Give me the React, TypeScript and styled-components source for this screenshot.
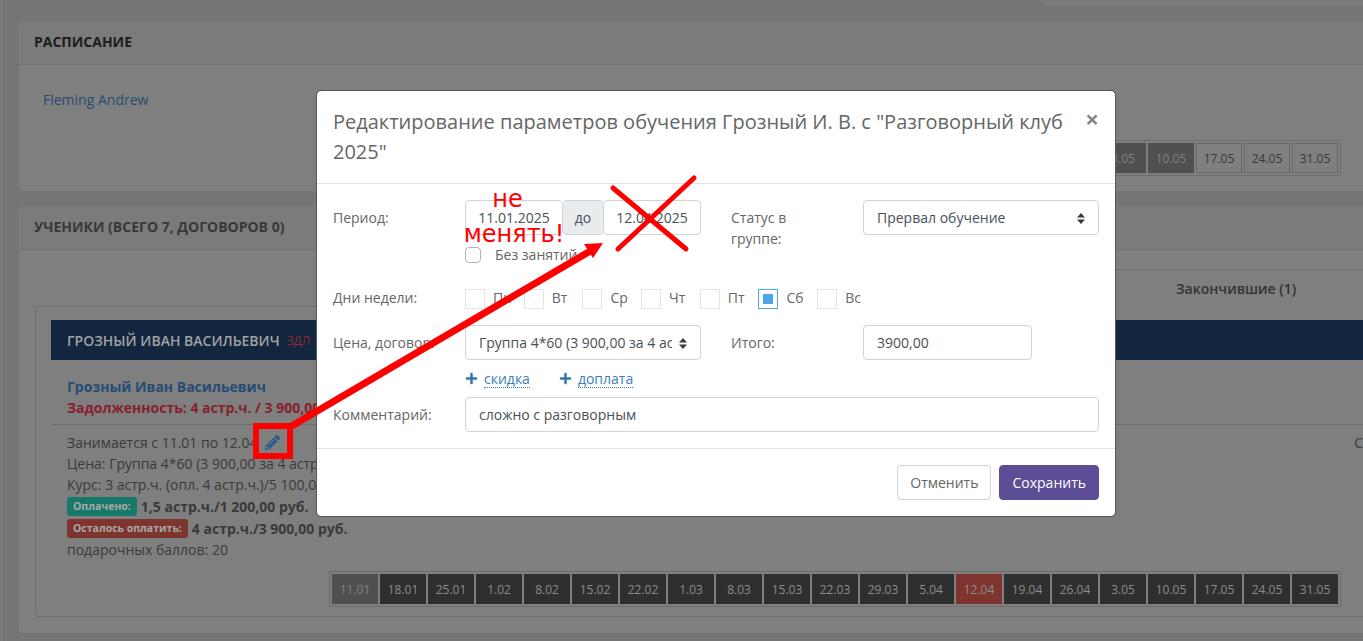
import React from 'react';
import styled, { createGlobalStyle } from 'styled-components';
import { FaPencilAlt, FaPlus } from 'react-icons/fa';

const GlobalStyle = createGlobalStyle`
  html, body {
    margin: 0;
    height: 641px;
    overflow: hidden;
    background: #747577;
    font-family: "Open Sans", "Noto Sans", sans-serif;
    font-size: 14px;
    line-height: 21px;
    color: #3a3a3a;
  }
  * { box-sizing: border-box; }
`;

const Page = styled.div`
  position: relative;
  width: 1363px;
  height: 641px;
  overflow: hidden;
  border-left: 3px solid #7b7b7c;
  padding-left: 16px;
`;

const TopBar = styled.div`
  height: 21px;
  display: flex;
  justify-content: flex-end;
`;

const TopMenu = styled.div`
  width: 320px;
  height: 6px;
  background: #7b7b7b;
  border-bottom-left-radius: 5px;
`;

const Panel = styled.section`
  background: #7f7f7f;
  border-radius: 4px 0 0 4px;
  margin-bottom: 15px;
`;

const PanelHeader = styled.h2<{ $dark?: boolean }>`
  margin: 0;
  height: 44px;
  padding: 0 15px 2px;
  display: flex;
  align-items: center;
  background: #7b7b7b;
  border-bottom: 1px solid #707070;
  border-radius: 4px 0 0 0;
  font-size: 14px;
  font-weight: 700;
  text-transform: uppercase;
  color: ${({ $dark }) => ($dark ? '#1c1c1c' : '#383838')};
`;

const ScheduleBody = styled.div`
  height: 126px;
  padding: 24px 22px 0 24px;
  display: flex;
  flex-direction: column;
  align-items: flex-start;
`;

const TeacherLink = styled.a`
  color: #264c74;
  height: 51px;
`;

const DateStrip = styled.div`
  margin-left: auto;
  display: flex;
  gap: 2px;
  padding: 2px;
  border: 1px solid #6e6e6e;
`;

const DateCell = styled.div<{ $kind: 'past' | 'done' | 'missed' | 'future' | 'first' }>`
  width: 46px;
  height: 30px;
  display: flex;
  align-items: center;
  justify-content: center;
  font-size: 12px;
  background: ${({ $kind }) =>
    $kind === 'past' ? '#2f2f2f' : $kind === 'missed' ? '#7f342f' : $kind === 'done' || $kind === 'first' ? '#505050' : 'transparent'};
  color: ${({ $kind }) => ($kind === 'future' ? '#383838' : $kind === 'first' || $kind === 'done' ? '#808080' : '#8c8c8c')};
  border: ${({ $kind }) => ($kind === 'future' ? '1px solid #696969' : 'none')};
`;

const StudentsBody = styled.div`
  padding: 19px 0 16px 16px;
`;

const Tabs = styled.div`
  display: flex;
  height: 38px;
`;

const TabSpacer = styled.div`
  flex: 1;
  border-bottom: 1px solid #6e6e6e;
`;

const ActiveTab = styled.div`
  width: 360px;
  padding-left: 173px;
  display: flex;
  align-items: center;
  border-top: 1px solid #6e6e6e;
  font-weight: 600;
  color: #333;
`;

const Card = styled.div`
  height: 310px;
  padding-top: 13px;
  padding-left: 15px;
  border-left: 1px solid #6e6e6e;
  border-bottom: 1px solid #6e6e6e;
  border-bottom-left-radius: 4px;
`;

const StudentBar = styled.div`
  height: 40px;
  padding-left: 16px;
  display: flex;
  align-items: center;
  gap: 7px;
  background: #12263f;
  color: #a2a2a2;
  font-weight: 600;
  text-transform: uppercase;
`;

const DebtTag = styled.span`
  font-size: 12px;
  font-weight: 400;
  color: #8c2a34;
`;

const StudentHead = styled.div`
  height: 65px;
  padding: 16px 0 0 16px;
  border-bottom: 1px solid #6e6e6e;
  font-weight: 700;
`;

const StudentName = styled.div`
  color: #264c74;
`;

const DebtLine = styled.div`
  color: #86202c;
`;

const StudentInfo = styled.div`
  position: relative;
  height: 146px;
  padding: 7px 0 0 16px;
`;

const InfoLine = styled.div`
  display: flex;
  align-items: center;
  height: 21px;
`;

const PayLine = styled(InfoLine)`
  height: 22px;
  font-weight: 700;
  gap: 4px;
`;

const EditIcon = styled(FaPencilAlt)`
  margin-left: 8px;
  width: 15px;
  height: 15px;
  color: #265a8c;
`;

const Badge = styled.span<{ $color: string }>`
  height: 19px;
  padding: 0 6px;
  display: flex;
  align-items: center;
  border-radius: 3px;
  background: ${({ $color }) => $color};
  color: #a8a8a8;
  font-size: 10.5px;
`;

const StatusStub = styled.span`
  position: absolute;
  top: 7px;
  right: 0;
`;

const StripRow = styled.div`
  padding-right: 22px;
  display: flex;
`;

const Modal = styled.div`
  position: absolute;
  left: 313px;
  top: 90px;
  width: 800px;
  background: #fff;
  background-clip: padding-box;
  border: 1px solid #555;
  border-radius: 5px;
  color: #666;
`;

const ModalHeader = styled.header`
  position: relative;
  padding: 16px 52px 16px 16px;
  border-bottom: 1px solid #e2e2e2;
`;

const ModalTitle = styled.h3`
  margin: 0;
  font-size: 20px;
  font-weight: 400;
  line-height: 30px;
`;

const CloseButton = styled.span`
  position: absolute;
  top: 13px;
  right: 16px;
  font-size: 24px;
  font-weight: 700;
  line-height: 30px;
  color: #888;
`;

const ModalBody = styled.div`
  padding: 16px;
`;

const FormRow = styled.div<{ $gap?: number }>`
  display: grid;
  grid-template-columns: 132px 266px 132px 236px;
  margin-bottom: ${({ $gap }) => $gap ?? 0}px;
`;

const FieldLabel = styled.label`
  max-width: 102px;
  padding-top: 7px;
`;

const FieldCol = styled.div`
  padding-right: 30px;
`;

const InputGroup = styled.div`
  display: flex;
  width: 236px;
`;

const TextBox = styled.div<{ $width?: number; $center?: boolean }>`
  width: ${({ $width }) => ($width ? `${$width}px` : '100%')};
  height: 35px;
  padding: 0 13px;
  display: flex;
  align-items: center;
  justify-content: ${({ $center }) => ($center ? 'center' : 'flex-start')};
  border: 1px solid #ced4da;
  border-radius: 4px;
  background: #fff;
  color: #495057;
  white-space: nowrap;
`;

const Addon = styled.div`
  width: 40px;
  height: 35px;
  display: flex;
  align-items: center;
  justify-content: center;
  border: 1px solid #ced4da;
  border-width: 1px 0;
  border-radius: 4px;
  background: #e9ecef;
  color: #495057;
`;

const SelectBox = styled(TextBox)`
  padding-right: 28px;
  position: relative;
`;

const SelectText = styled.span`
  overflow: hidden;
  display: block;
`;

const SelectArrow = styled.svg`
  position: absolute;
  right: 13px;
  top: 12px;
  width: 8px;
  height: 11px;
  fill: #343a40;
`;

const CheckRow = styled.div`
  margin-top: 9px;
  display: flex;
  align-items: center;
  height: 21px;
  gap: 14px;
`;

const CheckBox = styled.span`
  width: 16px;
  height: 16px;
  border: 1px solid #adb5bd;
  border-radius: 4px;
  background: #fff;
`;

const DaysList = styled.div`
  grid-column: 2 / 5;
  display: flex;
`;

const DayItem = styled.div`
  width: 58.7px;
  height: 20px;
  display: flex;
  align-items: center;
  gap: 8px;
`;

const DayBox = styled.span<{ $on?: boolean }>`
  width: 20px;
  height: 20px;
  flex: none;
  display: flex;
  align-items: center;
  justify-content: center;
  border: 1px solid ${({ $on }) => ($on ? '#4aa8e8' : '#e4e4e4')};
  &::after {
    content: '';
    width: 10px;
    height: 10px;
    background: ${({ $on }) => ($on ? '#4aa8e8' : 'transparent')};
  }
`;

const DayLabel = styled.span`
  line-height: 20px;
  margin-top: -2px;
`;

const DayRowLabel = styled.label`
  line-height: 20px;
  margin-top: -1px;
`;

const ExtrasRow = styled.div`
  height: 37px;
  margin-left: 132px;
  display: flex;
  align-items: center;
  gap: 29px;
`;

const ExtraLink = styled.span`
  display: flex;
  align-items: center;
  gap: 6px;
`;

const PlusIcon = styled(FaPlus)`
  width: 13px;
  height: 13px;
  color: #2f75b5;
`;

const DottedText = styled.span`
  color: #3a7fbd;
  line-height: 17px;
  border-bottom: 1px dotted #3a7fbd;
`;

const WideCol = styled.div`
  grid-column: 2 / 5;
`;

const ModalFooter = styled.footer`
  padding: 16px;
  display: flex;
  justify-content: flex-end;
  gap: 8px;
  border-top: 1px solid #e2e2e2;
`;

const FooterButton = styled.button<{ $primary?: boolean }>`
  height: 35px;
  padding: 0 12px;
  font: inherit;
  border-radius: 4px;
  border: 1px solid ${({ $primary }) => ($primary ? '#5c4d96' : '#ced4da')};
  background: ${({ $primary }) => ($primary ? '#5c4d96' : '#fff')};
  color: ${({ $primary }) => ($primary ? '#fff' : '#666')};
`;

const Annotation = styled.svg`
  position: absolute;
  left: -3px;
  top: 0;
  pointer-events: none;
`;

const Scribble = styled.div`
  position: absolute;
  left: 456px;
  top: 182px;
  width: 110px;
  font-family: "DejaVu Sans", sans-serif;
  font-size: 24px;
  line-height: 35px;
  text-align: center;
  color: #f00;
`;

const ScribbleTop = styled.span`
  padding-right: 13px;
`;

const dates = [
  '11.01', '18.01', '25.01', '1.02', '8.02', '15.02', '22.02', '1.03', '8.03', '15.03', '22.03',
  '29.03', '5.04', '12.04', '19.04', '26.04', '3.05', '10.05', '17.05', '24.05', '31.05',
];

const days = ['Пн', 'Вт', 'Ср', 'Чт', 'Пт', 'Сб', 'Вс'];

const scheduleKind = (i: number) => (i < 18 ? 'done' : 'future') as 'done' | 'future';
const studentKind = (d: string, i: number) =>
  (i === 0 ? 'first' : d === '12.04' ? 'missed' : 'past') as 'first' | 'missed' | 'past';

const SortArrows = () => (
  <SelectArrow viewBox="0 0 8 11">
    <path d="M4 0 L8 4.5 H0 Z M0 6.5 H8 L4 11 Z" />
  </SelectArrow>
);

const App: React.FC = () => (
  <Page>
    <GlobalStyle />
    <TopBar>
      <TopMenu />
    </TopBar>

    <Panel>
      <PanelHeader $dark>Расписание</PanelHeader>
      <ScheduleBody>
        <TeacherLink>Fleming Andrew</TeacherLink>
        <DateStrip>
          {dates.map((d, i) => (
            <DateCell key={d} $kind={scheduleKind(i)}>{d}</DateCell>
          ))}
        </DateStrip>
      </ScheduleBody>
    </Panel>

    <Panel>
      <PanelHeader>Ученики (всего 7, договоров 0)</PanelHeader>
      <StudentsBody>
        <Tabs>
          <TabSpacer />
          <ActiveTab>Закончившие (1)</ActiveTab>
        </Tabs>
        <Card>
          <StudentBar>
            Грозный Иван Васильевич <DebtTag>здл</DebtTag>
          </StudentBar>
          <StudentHead>
            <StudentName>Грозный Иван Васильевич</StudentName>
            <DebtLine>Задолженность: 4 астр.ч. / 3 900,00 руб.</DebtLine>
          </StudentHead>
          <StudentInfo>
            <InfoLine>
              Занимается с 11.01 по 12.04
              <EditIcon />
            </InfoLine>
            <InfoLine>Цена: Группа 4*60 (3 900,00 за 4 астр.ч.)</InfoLine>
            <InfoLine>Курс: 3 астр.ч. (опл. 4 астр.ч.)/5 100,00 руб.</InfoLine>
            <PayLine>
              <Badge $color="#17796a">Оплачено:</Badge> 1,5 астр.ч./1 200,00 руб.
            </PayLine>
            <PayLine>
              <Badge $color="#7f352f">Осталось оплатить:</Badge> 4 астр.ч./3 900,00 руб.
            </PayLine>
            <InfoLine>подарочных баллов: 20</InfoLine>
            <StatusStub>С</StatusStub>
          </StudentInfo>
          <StripRow>
            <DateStrip>
              {dates.map((d, i) => (
                <DateCell key={d} $kind={studentKind(d, i)}>{d}</DateCell>
              ))}
            </DateStrip>
          </StripRow>
        </Card>
      </StudentsBody>
    </Panel>

    <Modal>
      <ModalHeader>
        <ModalTitle>Редактирование параметров обучения Грозный И. В. с "Разговорный клуб 2025"</ModalTitle>
        <CloseButton>×</CloseButton>
      </ModalHeader>
      <ModalBody>
        <FormRow $gap={24}>
          <FieldLabel>Период:</FieldLabel>
          <FieldCol>
            <InputGroup>
              <TextBox $width={98} $center>11.01.2025</TextBox>
              <Addon>до</Addon>
              <TextBox $width={98} $center>12.04.2025</TextBox>
            </InputGroup>
            <CheckRow>
              <CheckBox />
              Без занятий
            </CheckRow>
          </FieldCol>
          <FieldLabel>Статус в группе:</FieldLabel>
          <SelectBox>
            <SelectText>Прервал обучение</SelectText>
            <SortArrows />
          </SelectBox>
        </FormRow>

        <FormRow $gap={16}>
          <DayRowLabel>Дни недели:</DayRowLabel>
          <DaysList>
            {days.map(d => (
              <DayItem key={d}>
                <DayBox $on={d === 'Сб'} />
                <DayLabel>{d}</DayLabel>
              </DayItem>
            ))}
          </DaysList>
        </FormRow>

        <FormRow>
          <FieldLabel>Цена, договор:</FieldLabel>
          <FieldCol>
            <SelectBox>
              <SelectText>Группа 4*60 (3 900,00 за 4 астр.ч.)</SelectText>
              <SortArrows />
            </SelectBox>
          </FieldCol>
          <FieldLabel>Итого:</FieldLabel>
          <TextBox $width={169}>3900,00</TextBox>
        </FormRow>

        <ExtrasRow>
          <ExtraLink><PlusIcon /><DottedText>скидка</DottedText></ExtraLink>
          <ExtraLink><PlusIcon /><DottedText>доплата</DottedText></ExtraLink>
        </ExtrasRow>

        <FormRow>
          <FieldLabel>Комментарий:</FieldLabel>
          <WideCol>
            <TextBox>сложно с разговорным</TextBox>
          </WideCol>
        </FormRow>
      </ModalBody>
      <ModalFooter>
        <FooterButton>Отменить</FooterButton>
        <FooterButton $primary>Сохранить</FooterButton>
      </ModalFooter>
    </Modal>

    <Scribble><ScribbleTop>не</ScribbleTop> менять!</Scribble>

    <Annotation width="1363" height="641" viewBox="0 0 1363 641">
      <rect x="256" y="426" width="34" height="30" fill="none" stroke="#f00" strokeWidth="6" />
      <line x1="290" y1="427" x2="592" y2="250" stroke="#f00" strokeWidth="7" />
      <polygon points="603,243 584,244 593,258" fill="#f00" />
      <line x1="613" y1="188" x2="686" y2="249" stroke="#f00" strokeWidth="5" strokeLinecap="round" />
      <line x1="694" y1="178" x2="618" y2="249" stroke="#f00" strokeWidth="5" strokeLinecap="round" />
    </Annotation>
  </Page>
);

export default App;
